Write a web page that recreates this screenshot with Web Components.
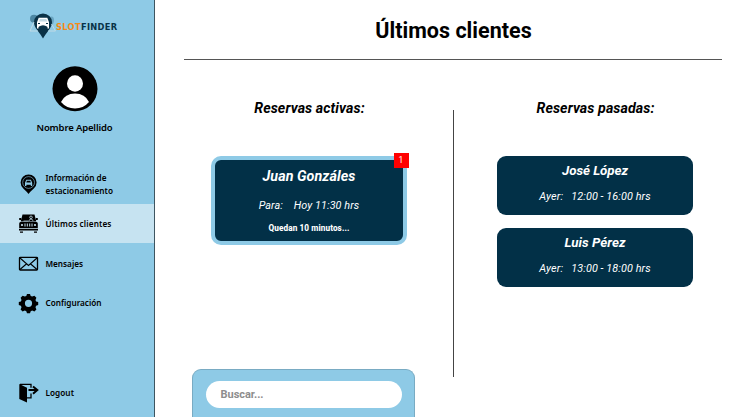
<!DOCTYPE html>
<html lang="es">
<head>
<meta charset="utf-8">
<title>SlotFinder</title>
<style>
html,body{margin:0;height:100%;overflow:hidden;background:#fff}
body{font-family:Roboto,"Liberation Sans",sans-serif;color:#000}
</style>
</head>
<body>
<slot-app></slot-app>
<script>
function define(name, html, init) {
  const t = document.createElement('template');
  t.innerHTML = html;
  customElements.define(name, class extends HTMLElement {
    connectedCallback() {
      if (this.shadowRoot) return;
      this.attachShadow({mode: 'open'}).appendChild(t.content.cloneNode(true));
      if (init) init(this, this.shadowRoot);
    }
  });
}

/* Single line whose tracking is adjusted to the width given in "w". */
define('fit-text', `<style>:host{display:block;white-space:nowrap}span{display:inline-block}</style><span><slot></slot></span>`, (el, root) => {
  const s = root.querySelector('span');
  const natural = s.getBoundingClientRect().width;
  const n = el.textContent.length;
  const gap = (Number(el.getAttribute('w')) - natural) / n;
  s.style.letterSpacing = gap.toFixed(3) + 'px';
});

define('brand-logo', `<style>
:host{display:flex;height:26px;margin:13px 0 0 29px;align-items:flex-start}
svg{flex:none;display:block}
.t{display:flex;margin-top:8px;font:700 8.300px/12px "DejaVu Sans",sans-serif;color:#093348}
.o{color:#f78b17}
</style>
<svg width="27" height="26" viewBox="0 0 27 26">
<circle cx="5" cy="5.700" r="4" fill="#4d87a3"/><path d="M20 4q5-2 5 3t-4 6z" fill="#6ba6c2"/>
<path d="M14 25.500Q12 22 8.500 17.500Q4.800 13 5 9A9 8.600 0 0 1 23 9Q23 13 19.500 17.500Q16 22 14 25.500Z" fill="#0a3247"/>
<path d="M1 18 5 9M26.500 18l-4-7M1 18h8M19 18h7.500" stroke="#c5dce7" stroke-width=".9" fill="none"/>
<path d="M9.700 4.700h8.600l1.700 4.500v6.300h-2v-1.700h-8v1.700H8V9.200z" fill="#fff"/>
<path d="M10.800 6h6.500l.8 2.400H10z" fill="#c7dce5"/><path d="M9 10.500h2M17 10.500h2" stroke="#0a3247"/>
<path d="M9.500 14q4.500-3.500 9 0v2h-9z" fill="#0a3247"/>
</svg><div class="t"><fit-text class="o" w="25">SLOT</fit-text><fit-text w="36.500">FINDER</fit-text></div>`);

define('user-profile', `<style>
:host{display:flex;flex-direction:column;align-items:center;margin-top:27px;padding-right:5px;font:600 9.500px/14px "Noto Sans","Open Sans",sans-serif}
svg{display:block;margin-bottom:9px}
</style>
<svg width="46" height="46" viewBox="0 0 46 46"><circle cx="23" cy="22.800" r="22.500"/><ellipse cx="23" cy="17.500" rx="8" ry="8.300" fill="#fff"/><path d="M9 36Q13 27.500 23 27.500T37 36Q31.500 42.500 23 42.500T9 36Z" fill="#fff"/></svg>
<fit-text w="76">Nombre Apellido</fit-text>`);

define('nav-item', `<style>
:host{display:flex;align-items:center;box-sizing:border-box;height:39px;padding-left:18px;font:600 8.200px/12.500px "Noto Sans","Open Sans",sans-serif}
:host([active]){background:#c6e3f1}
:host([low]){padding-top:1px}
.i{width:21px;height:21px;margin-right:6.500px;flex:none}
::slotted(svg){display:block}
</style><div class="i"><slot name="icon"></slot></div><div><slot></slot></div>`);

define('side-bar', `<style>
:host{display:flex;flex-direction:column;box-sizing:border-box;width:155px;height:417px;background:#8ecae6;border-right:1px solid #3e5560}
nav{margin-top:30px;display:flex;flex-direction:column}
nav-item:nth-child(3){margin-top:1px}
.out{margin-top:51px}
</style>
<brand-logo></brand-logo>
<user-profile></user-profile>
<nav>
<nav-item><svg slot="icon" width="21" height="21" viewBox="0 0 21 21"><path d="M10.500 20Q9 18 5.300 14.600Q2.600 11.800 2.600 8.500a8 8 0 0 1 16 0Q18.600 11.800 15.800 14.600Q12 18 10.500 20Z"/><circle cx="10.600" cy="8.500" r="5.900" fill="none" stroke="#8ecae6" stroke-width=".6"/><path d="M8.300 5.800h4.600l1.300 3v3.200h-1.400v-1.200H8.400V12H7V8.800z" fill="#8ecae6"/><path d="M8.900 6.700h3.400l.6 1.700H8.300z"/></svg><fit-text w="61">Información de</fit-text><fit-text w="67.500">estacionamiento</fit-text></nav-item>
<nav-item active low><svg slot="icon" width="21" height="21" viewBox="0 0 21 21"><path d="M4.500 .5h12l1.800 7H2.700z"/><path d="M1.200 4h2v2h-2zM17.800 4h2v2h-2zM2.500 8h16q1.300 0 1.300 1.500V14H1.200V9.500Q1.200 8 2.500 8zM1 14.800h19v1.600H1zM2 17.500h3v1.300H2zM16 17.500h3v1.300h-3z"/><circle cx="13" cy="3.300" r="1.300" fill="none" stroke="#c6e3f1" stroke-width=".8"/><path d="M11 7q0-1.800 2-1.800T15 7M5.500 7h5" fill="none" stroke="#c6e3f1" stroke-width=".7"/><g fill="#c6e3f1"><circle cx="4" cy="11" r="1.100"/><circle cx="17" cy="11" r="1.100"/><path d="M6.500 9.500h1v3h-1zM8.800 9.500h1v3h-1zM11.200 9.500h1v3h-1zM13.500 9.500h1v3h-1z"/></g></svg><fit-text w="66">Últimos clientes</fit-text></nav-item>
<nav-item low><svg slot="icon" width="21" height="21" viewBox="0 0 21 21" fill="none" stroke="#000"><rect x="1.500" y="3.300" width="18" height="12.700" rx=".8" stroke-width="1.300"/><path d="M2 4 10.500 11.500 19 4M2 15.500l6.300-5.500M19 15.500 12.700 10" stroke-width="1.100"/></svg><fit-text w="37.500">Mensajes</fit-text></nav-item>
<nav-item low><svg slot="icon" width="21" height="21" viewBox="0 0 21 21"><path fill-rule="evenodd" d="M8.300 3 9 1h3l.7 2 1.500.6 2.200-.9 2 2-.9 2.200.6 1.500 2.100.7v3l-2.100.7-.6 1.500.9 2.200-2 2-2.200-.9-1.500.6-.7 2H9l-.7-2-1.500-.6-2.200.9-2-2 .9-2.200-.6-1.500-2.100-.7v-3l2.100-.7.6-1.500-.9-2.200 2-2 2.200.9zM10.500 6.700a3.600 3.600 0 1 0 0 7.200 3.600 3.600 0 0 0 0-7.200z"/></svg><fit-text w="56">Configuración</fit-text></nav-item>
</nav>
<nav-item low class="out"><svg slot="icon" width="21" height="21" viewBox="0 0 21 21"><path d="M1.300 1 9 4.800v14.700L1.300 16z"/><path d="M2 1.400h11v3.400M13 10.500v4.300H9" fill="none" stroke="#000" stroke-width="1.300"/><path d="M10.500 7.100h8M15 3.500l4.300 3.600L15 10.800" fill="none" stroke="#000" stroke-width="2"/></svg><fit-text w="28.500">Logout</fit-text></nav-item>`);

define('booking-card', `<style>
:host{display:flex;flex-direction:column;align-items:center;box-sizing:border-box;width:196px;height:59px;border-radius:9px;background:#023047;color:#fff;padding-top:5px;margin-bottom:13px;position:relative}
:host([active]){height:89px;border:4px solid #8ecae6;border-radius:10px;padding-top:6px}
.name{font:italic 700 13.300px/20px Roboto,sans-serif}
:host([active]) .name{font-size:14.300px;line-height:21px}
.when{display:flex;gap:8px;font:italic 400 10.800px/14px Roboto,sans-serif;margin-top:9px}
:host([active]) .when{gap:11px;margin-top:11.500px}
.note{font:800 8.200px/12px Roboto,sans-serif;margin-top:9.500px}
.badge{position:absolute;right:-5.500px;top:-7px;width:15px;height:15px;background:#f00;font:400 8.500px/15px Roboto,sans-serif;text-align:center}
</style><div class="name"><slot name="name"></slot></div><div class="when"><slot></slot></div>`, (el, root) => {
  for (const c of ['note', 'badge']) if (el.querySelector(`[slot=${c}]`)) {
    const d = document.createElement('div');
    d.className = c;
    d.innerHTML = `<slot name="${c}"></slot>`;
    root.append(d);
  }
});

define('booking-column', `<style>
:host{display:flex;flex-direction:column;align-items:center}
h2{margin:7px 0 38px;padding-left:1px;font:italic 700 14.200px/20px Roboto,sans-serif}
</style><h2><slot name="title"></slot></h2><slot></slot>`);

define('search-panel', `<style>
:host{display:block;box-sizing:border-box;width:222.500px;height:48px;margin-left:27px;padding:11px 13px 0;background:#8ecae6;border:1px solid #79abc3;border-bottom:0;border-radius:9px 9px 0 0}
.f{width:195.500px;height:27px;box-sizing:border-box;padding-left:14.500px;border-radius:14px;background:#fff;color:#8d8d8d;font:700 11px/27px Roboto,sans-serif}
</style><div class="f"><slot></slot></div>`);

define('slot-app', `<style>
:host{display:grid;grid-template-columns:155px 590px;height:417px}
main{display:flex;flex-direction:column;padding-left:10px}
header{margin-left:19px;width:538px;height:60px;box-sizing:border-box;border-bottom:1px solid #555;padding-top:17px}
h1{margin:0;padding-left:1px;display:flex;justify-content:center;font:700 21.500px/28px Roboto,sans-serif}
.cols{display:grid;grid-template-columns:288px 1px 282px;height:309px;box-sizing:border-box;padding-top:31px}
.line{background:#444;height:267px;margin-top:19px}
</style>
<side-bar></side-bar>
<main>
<header><h1><fit-text w="156.500">Últimos clientes</fit-text></h1></header>
<div class="cols">
<booking-column><fit-text slot="title" w="110.500">Reservas activas:</fit-text>
<booking-card active><fit-text slot="name" w="93">Juan Gonzáles</fit-text><fit-text w="24">Para:</fit-text><fit-text w="65.500">Hoy 11:30 hrs</fit-text><fit-text slot="note" w="81">Quedan 10 minutos...</fit-text><span slot="badge">1</span></booking-card></booking-column>
<div class="line"></div>
<booking-column><fit-text slot="title" w="118">Reservas pasadas:</fit-text>
<booking-card><fit-text slot="name" w="66">José López</fit-text><fit-text w="24">Ayer:</fit-text><fit-text w="79.500">12:00 - 16:00 hrs</fit-text></booking-card>
<booking-card><fit-text slot="name" w="61">Luis Pérez</fit-text><fit-text w="24">Ayer:</fit-text><fit-text w="79.500">13:00 - 18:00 hrs</fit-text></booking-card></booking-column>
</div>
<search-panel><fit-text w="43">Buscar...</fit-text></search-panel>
</main>`);
</script>
</body>
</html>
